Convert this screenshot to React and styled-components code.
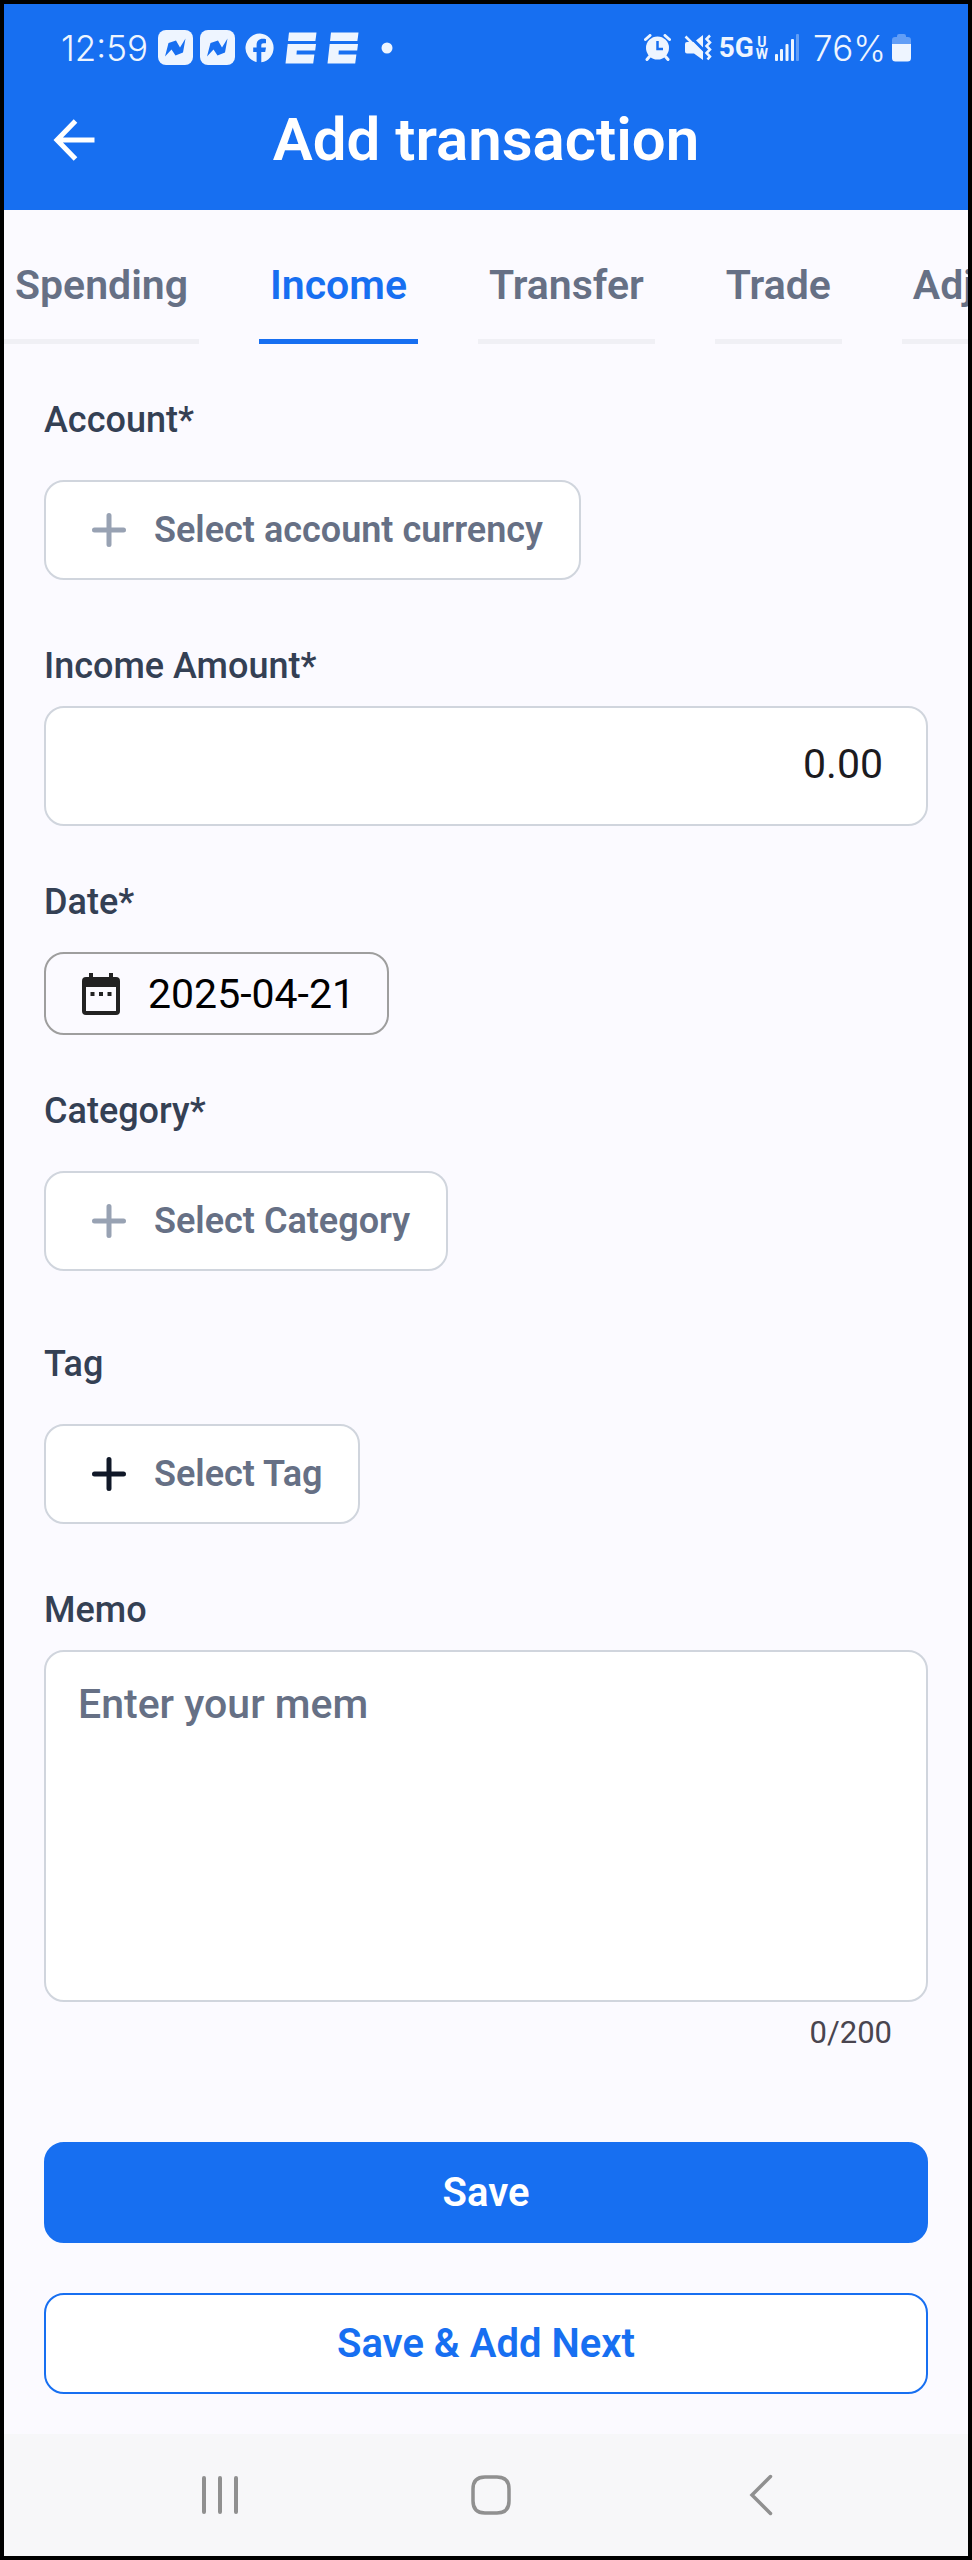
import { useState } from 'react';
import { createGlobalStyle, styled } from 'styled-components';

const GlobalStyle = createGlobalStyle`
  :root {
    --color-brand: #176ff1;
    --color-surface: #fbfaff;
    --color-border: #d0d5dd;
    --color-grey-400: #98a2b3;
    --color-grey-500: #667085;
    --color-grey-700: #344054;
    --color-grey-900: #101828;
    --border-radius: 20px;
  }

  *,
  *::before,
  *::after {
    box-sizing: border-box;
  }

  body {
    margin: 0;
    background-color: #000;
    font-family: Roboto, 'Liberation Sans', sans-serif;
  }

  button,
  input,
  textarea {
    margin: 0;
    padding: 0;
    font: inherit;
  }

  button {
    cursor: pointer;
  }

  svg {
    display: block;
    flex-shrink: 0;
  }
`;

const Screen = styled.div`
  display: flex;
  flex-direction: column;
  min-height: 100vh;
  border: 4px solid #000;
  background-color: var(--color-surface);
`;

const Header = styled.header`
  background-color: var(--color-brand);
  color: #fff;
  padding-bottom: 10px;
`;

const StatusBar = styled.div`
  display: flex;
  align-items: center;
  justify-content: space-between;
  height: 76px;
  padding: 11px 56px 0 57px;
  color: #eef5ff;
`;

const StatusGroup = styled.div`
  display: flex;
  align-items: center;
  gap: ${props => props.$gap}px;
`;

const StatusText = styled.span`
  font-family: Inter, Roboto, sans-serif;
  font-size: 35px;
  line-height: 40px;
  font-weight: 300;
`;

const Network = styled.span`
  display: flex;
  align-items: center;
  gap: 2px;
  font-size: 28px;
  line-height: 30px;
  font-weight: 700;
`;

const NetworkBand = styled.span`
  display: flex;
  flex-direction: column;
  align-items: center;
  font-size: 14px;
  line-height: 12px;
`;

const TitleBar = styled.div`
  display: grid;
  grid-template-columns: 60px 1fr 60px;
  align-items: center;
  height: 120px;
  padding: 0 40px;
`;

const BackButton = styled.button`
  display: flex;
  align-items: center;
  justify-content: center;
  height: 60px;
  border: none;
  background: none;
  color: inherit;
`;

const Title = styled.h1`
  margin: 0;
  font-size: 60px;
  line-height: 72px;
  font-weight: 600;
  text-align: center;
`;

const Tabs = styled.div`
  display: flex;
  gap: 60px;
  overflow: hidden;
`;

const Tab = styled.button`
  flex-shrink: 0;
  height: 134px;
  padding: 20px 11px 0;
  border: none;
  border-bottom: 5px solid ${props => (props.$active ? 'var(--color-brand)' : '#f0f0f5')};
  background: none;
  color: ${props => (props.$active ? 'var(--color-brand)' : 'var(--color-grey-500)')};
  font-size: 41px;
  line-height: 48px;
  font-weight: 600;
`;

const Form = styled.form`
  display: flex;
  flex-direction: column;
  flex-grow: 1;
  padding: 56px 40px 40px;
`;

const Field = styled.div`
  display: flex;
  flex-direction: column;
  align-items: flex-start;
  gap: ${props => props.$gap}px;
  margin-bottom: ${props => props.$space}px;
`;

const Label = styled.label`
  color: var(--color-grey-700);
  font-size: 36px;
  line-height: 40px;
  font-weight: 500;
`;

const SelectButton = styled.button`
  display: flex;
  align-items: center;
  gap: 28px;
  height: 100px;
  padding: 0 36px 0 46px;
  border: 2px solid var(--color-border);
  border-radius: var(--border-radius);
  background-color: #fff;
  color: var(--color-grey-500);
  font-size: 36px;
  line-height: 40px;
  font-weight: 600;

  & svg {
    color: ${props => (props.$dark ? 'var(--color-grey-900)' : 'var(--color-grey-400)')};
  }
`;

const AmountInput = styled.input`
  width: 100%;
  height: 120px;
  padding: 0 43px 4px;
  border: 2px solid var(--color-border);
  border-radius: var(--border-radius);
  background-color: #fff;
  color: #1c1b1f;
  font-size: 41px;
  text-align: right;
`;

const DateButton = styled.button`
  display: flex;
  align-items: center;
  gap: 28px;
  height: 83px;
  padding: 0 32px 0 36px;
  border: 2px solid #9e9e9e;
  border-radius: var(--border-radius);
  background: none;
  color: #000;
  font-size: 41px;
  line-height: 48px;
`;

const MemoInput = styled.textarea`
  display: block;
  width: 100%;
  height: 352px;
  padding: 28px 32px;
  border: 2px solid var(--color-border);
  border-radius: var(--border-radius);
  background-color: #fff;
  color: var(--color-grey-900);
  font-size: 41px;
  line-height: 48px;
  font-weight: 500;
  resize: none;

  &::placeholder {
    color: var(--color-grey-500);
    opacity: 1;
  }
`;

const Counter = styled.p`
  margin: 10px 36px 89px;
  color: #49454f;
  font-size: 31px;
  line-height: 41px;
  text-align: right;
`;

const Actions = styled.div`
  display: flex;
  flex-direction: column;
  gap: 50px;
`;

const ActionButton = styled.button`
  height: 101px;
  border: 2px solid var(--color-brand);
  border-radius: var(--border-radius);
  background-color: ${props => (props.$outlined ? '#fff' : 'var(--color-brand)')};
  color: ${props => (props.$outlined ? 'var(--color-brand)' : '#fff')};
  font-size: 40px;
  line-height: 48px;
  font-weight: 600;
`;

const NavBar = styled.nav`
  display: flex;
  justify-content: space-between;
  align-items: center;
  height: 122px;
  padding: 0 167px 0 176px;
  background-color: #f7f7f9;
`;

const NavButton = styled.button`
  display: flex;
  align-items: center;
  justify-content: center;
  width: 80px;
  height: 80px;
  border: none;
  background: none;
  color: #909090;
`;

function NewsIcon() {
  return (
    <svg width="35" height="35" viewBox="0 0 35 35">
      <rect width="35" height="35" rx="8" fill="currentColor" />
      <path
        d="M7 26.5 10.5 13 18 10.5 22 17.5 27.5 8.5 25 22.5 17.5 25.5 13.5 19.5Z"
        fill="#176ff1"
      />
    </svg>
  );
}

function FacebookIcon() {
  return (
    <svg width="30" height="30" viewBox="0 0 30 30" fill="currentColor">
      <path d="M15 .5a14.5 14.5 0 0 0-3.4 28.6V19H8.2v-4.6h3.4v-2.2c0-4.2 2.2-6.4 6.2-6.4 1.1 0 2.2.1 3.2.4v4.1h-2.3c-1.8 0-2.4.8-2.4 2.2v1.9h4.7l-.8 4.6h-3.9v10.3A14.5 14.5 0 0 0 15 .5Z" />
    </svg>
  );
}

function BarsLogoIcon() {
  return (
    <svg width="32" height="32" viewBox="0 0 32 32" fill="currentColor">
      <path d="M4 .5H31.5L30.4 9H3Z" />
      <path d="M2.7 12H31L30.2 18.5H11.8L11.5 22.5H29.4L28.2 31.5H.5Z" />
    </svg>
  );
}

function AlarmIcon() {
  return (
    <svg width="27" height="27" viewBox="0 0 27 27">
      <path
        d="M1.5 5.5 6 1.5M25.5 5.5 21 1.5M5.5 22.5 3 25.5M21.5 22.5 24 25.5"
        stroke="currentColor"
        strokeWidth="3"
        strokeLinecap="round"
      />
      <circle cx="13.5" cy="14" r="11.5" fill="currentColor" />
      <path d="M13.5 7V15H19" fill="none" stroke="#176ff1" strokeWidth="2.5" />
    </svg>
  );
}

function VibrateIcon() {
  return (
    <svg width="28" height="27" viewBox="0 0 28 27">
      <path
        d="M19 1V26L10 19.5H3Q1 19.5 1 17.5V10Q1 8 3 8H10Z"
        fill="currentColor"
      />
      <path d="M4 .5 20.5 17" stroke="#176ff1" strokeWidth="3" />
      <path d="M1.5 2.5 18.5 19.5" stroke="currentColor" strokeWidth="2.5" />
      <path
        d="M26 1.5 22.5 5 26 8.5 22.5 12 26 15.5 22.5 19 26 22.5 23.5 25.5"
        fill="none"
        stroke="currentColor"
        strokeWidth="2.5"
      />
    </svg>
  );
}

function SignalIcon() {
  return (
    <svg width="25" height="27" viewBox="0 0 25 27" fill="currentColor">
      <rect x="0" y="20" width="3" height="7" rx="1" />
      <rect x="5" y="15" width="3" height="12" rx="1" />
      <rect x="10.5" y="10" width="3" height="17" rx="1" />
      <rect x="16" y="5" width="3" height="22" rx="1" />
      <rect x="21" y="0" width="3" height="27" rx="1" opacity=".35" />
    </svg>
  );
}

function BatteryIcon() {
  return (
    <svg width="20" height="28" viewBox="0 0 20 28" fill="currentColor">
      <path d="M0 10V6Q0 3 3 3H5V2Q5 0 7 0H12Q14 0 14 2V3H16Q19 3 19 6V10Z" opacity=".35" />
      <path d="M0 10H19V24Q19 27.5 15.5 27.5H3.5Q0 27.5 0 24Z" />
    </svg>
  );
}

function BackIcon() {
  return (
    <svg width="42" height="42" viewBox="0 0 42 42" fill="none" stroke="currentColor" strokeWidth="5">
      <path d="M22.5 2 4 21 22.5 40M4 21H41.5" />
    </svg>
  );
}

function PlusIcon() {
  return (
    <svg width="34" height="34" viewBox="0 0 34 34" fill="none" stroke="currentColor" strokeWidth="5" strokeLinecap="round">
      <path d="M17 2.5V31.5M2.5 17H31.5" />
    </svg>
  );
}

function CalendarIcon() {
  return (
    <svg width="38" height="42" viewBox="0 0 38 42" fill="#222">
      <path
        fillRule="evenodd"
        d="M7 0H11V4H27V0H31V4H34Q38 4 38 8V38Q38 42 34 42H4Q0 42 0 38V8Q0 4 4 4H7ZM4 14V38H34V14Z"
      />
      <rect x="8.5" y="19" width="4" height="4" />
      <rect x="17" y="19" width="4" height="4" />
      <rect x="25.5" y="19" width="4" height="4" />
    </svg>
  );
}

const tabs = ['Spending', 'Income', 'Transfer', 'Trade', 'Adjustment'];
const MAX_MEMO = 200;

function SelectField({ id, label, text, space, dark }) {
  return (
    <Field $gap={40} $space={space}>
      <Label htmlFor={id}>{label}</Label>
      <SelectButton id={id} type="button" $dark={dark}>
        <PlusIcon />
        <span>{text}</span>
      </SelectButton>
    </Field>
  );
}

function App() {
  const [activeTab, setActiveTab] = useState('Income');
  const [amount, setAmount] = useState('0.00');
  const [memo, setMemo] = useState('');

  return (
    <>
      <GlobalStyle />
      <Screen>
        <Header>
          <StatusBar>
            <StatusGroup $gap={10}>
              <StatusText>12:59</StatusText>
              <StatusGroup $gap={7}>
                <NewsIcon />
                <NewsIcon />
              </StatusGroup>
              <FacebookIcon />
              <StatusGroup $gap={10}>
                <BarsLogoIcon />
                <BarsLogoIcon />
              </StatusGroup>
              <svg width="24" height="12" viewBox="0 0 24 12" fill="currentColor">
                <circle cx="18" cy="6" r="5.5" />
              </svg>
            </StatusGroup>
            <StatusGroup $gap={13}>
              <AlarmIcon />
              <StatusGroup $gap={7}>
                <VibrateIcon />
                <Network>
                  5G
                  <NetworkBand>
                    <span>U</span>
                    <span>W</span>
                  </NetworkBand>
                </Network>
                <SignalIcon />
              </StatusGroup>
              <StatusGroup $gap={6}>
                <StatusText>76%</StatusText>
                <BatteryIcon />
              </StatusGroup>
            </StatusGroup>
          </StatusBar>
          <TitleBar>
            <BackButton type="button" aria-label="Back">
              <BackIcon />
            </BackButton>
            <Title>Add transaction</Title>
          </TitleBar>
        </Header>

        <Tabs role="tablist">
          {tabs.map(tab => (
            <Tab
              key={tab}
              type="button"
              role="tab"
              aria-selected={tab === activeTab}
              $active={tab === activeTab}
              onClick={() => setActiveTab(tab)}
            >
              {tab}
            </Tab>
          ))}
        </Tabs>

        <Form onSubmit={e => e.preventDefault()}>
          <SelectField id="account" label="Account*" text="Select account currency" space={66} />

          <Field $gap={20} $space={56}>
            <Label htmlFor="amount">Income Amount*</Label>
            <AmountInput
              id="amount"
              inputMode="decimal"
              value={amount}
              onChange={e => setAmount(e.target.value)}
            />
          </Field>

          <Field $gap={30} $space={56}>
            <Label htmlFor="date">Date*</Label>
            <DateButton id="date" type="button">
              <CalendarIcon />
              <span>2025-04-21</span>
            </DateButton>
          </Field>

          <SelectField id="category" label="Category*" text="Select Category" space={73} />
          <SelectField id="tag" label="Tag" text="Select Tag" space={66} dark />

          <Field $gap={20} $space={0}>
            <Label htmlFor="memo">Memo</Label>
            <MemoInput
              id="memo"
              placeholder="Enter your mem"
              maxLength={MAX_MEMO}
              value={memo}
              onChange={e => setMemo(e.target.value)}
            />
          </Field>
          <Counter>
            {memo.length}/{MAX_MEMO}
          </Counter>

          <Actions>
            <ActionButton type="submit">Save</ActionButton>
            <ActionButton type="button" $outlined>
              Save &amp; Add Next
            </ActionButton>
          </Actions>
        </Form>

        <NavBar>
          <NavButton type="button" aria-label="Recent apps">
            <svg width="36" height="38" viewBox="0 0 36 38" stroke="currentColor" strokeWidth="4" strokeLinecap="round">
              <path d="M2 2V36M18 2V36M34 2V36" />
            </svg>
          </NavButton>
          <NavButton type="button" aria-label="Home">
            <svg width="40" height="40" viewBox="0 0 40 40" fill="none" stroke="currentColor" strokeWidth="3.5">
              <path d="M14 2H26Q38 2 38 14V26Q38 38 26 38H14Q2 38 2 26V14Q2 2 14 2Z" />
            </svg>
          </NavButton>
          <NavButton type="button" aria-label="Back to previous app">
            <svg width="24" height="42" viewBox="0 0 24 42" fill="none" stroke="currentColor" strokeWidth="3.5" strokeLinecap="round">
              <path d="M21.5 2.5 3 21 21.5 39.5" />
            </svg>
          </NavButton>
        </NavBar>
      </Screen>
    </>
  );
}

export default App;
